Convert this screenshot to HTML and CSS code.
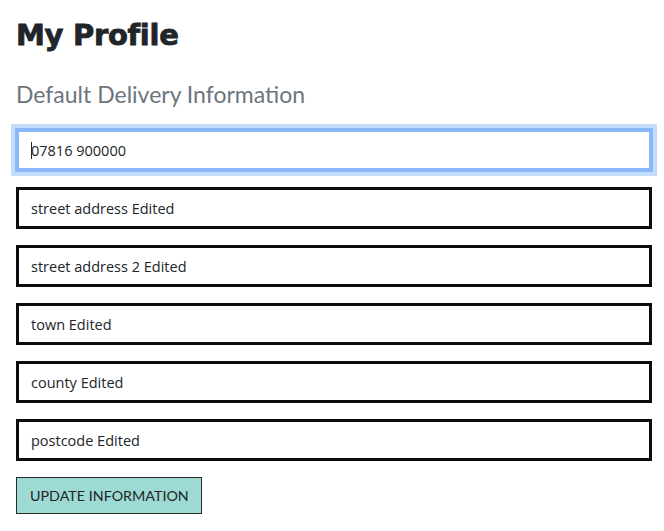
FILE: index.html
```html
<!DOCTYPE html>
<html>
<head>
<meta charset="utf-8">
<link rel="stylesheet" href="styles.css">
</head>
<body>
<main class="page">
  <h1 class="title">My Profile</h1>
  <h2 class="subtitle">Default Delivery Information</h2>
  <form class="form">
    <div class="field">
      <input class="input input-focus" type="text" value="07816 900000">
      <span class="caret"></span>
    </div>
    <div class="field"><input class="input" type="text" value="street address Edited"></div>
    <div class="field"><input class="input" type="text" value="street address 2 Edited"></div>
    <div class="field"><input class="input" type="text" value="town Edited"></div>
    <div class="field"><input class="input" type="text" value="county Edited"></div>
    <div class="field"><input class="input" type="text" value="postcode Edited"></div>
    <button class="btn" type="button">UPDATE INFORMATION</button>
  </form>
</main>
</body>
</html>
```
FILE: styles.css
```css
html, body {
  margin: 0;
  padding: 0;
  background: #ffffff;
}
.page {
  padding: 16px 12px 0 16px;
}
.title {
  margin: 0;
  font-family: "DejaVu Sans", sans-serif;
  font-weight: 700;
  font-size: 29px;
  line-height: 38px;
  color: #212529;
  letter-spacing: -0.3px;
  -webkit-text-stroke: 0.8px #212529;
}
.subtitle {
  margin: 26px 0 0 0;
  font-family: "Lato", sans-serif;
  font-weight: 400;
  font-size: 23px;
  line-height: 28px;
  color: #6c757d;
}
.form {
  display: flex;
  flex-direction: column;
  align-items: flex-start;
  gap: 16px;
  margin-top: 21px;
}
.field {
  position: relative;
  width: 100%;
}
.input {
  display: block;
  box-sizing: border-box;
  width: 100%;
  height: 42px;
  margin: 0;
  padding: 0 12px;
  border: 3px solid #0c0c0c;
  border-radius: 0;
  background: #fff;
  font-family: "Open Sans", "Noto Sans", sans-serif;
  font-size: 14.5px;
  color: #212529;
  outline: none;
}
.input-focus {
  border-color: #89b8f8;
  box-shadow: 0 0 0 1px #89b8f8, 0 0 0 5px #c2dcfc;
}
.caret {
  position: absolute;
  left: 15px;
  top: 13px;
  width: 1px;
  height: 17px;
  background: #212529;
}
.btn {
  box-sizing: border-box;
  height: 37px;
  padding: 0 12px 0 13px;
  border: 1px solid #2a2a2a;
  border-radius: 0;
  background: #9ddad3;
  font-family: "Lato", sans-serif;
  font-size: 14.3px;
  color: #212529;
}
```
